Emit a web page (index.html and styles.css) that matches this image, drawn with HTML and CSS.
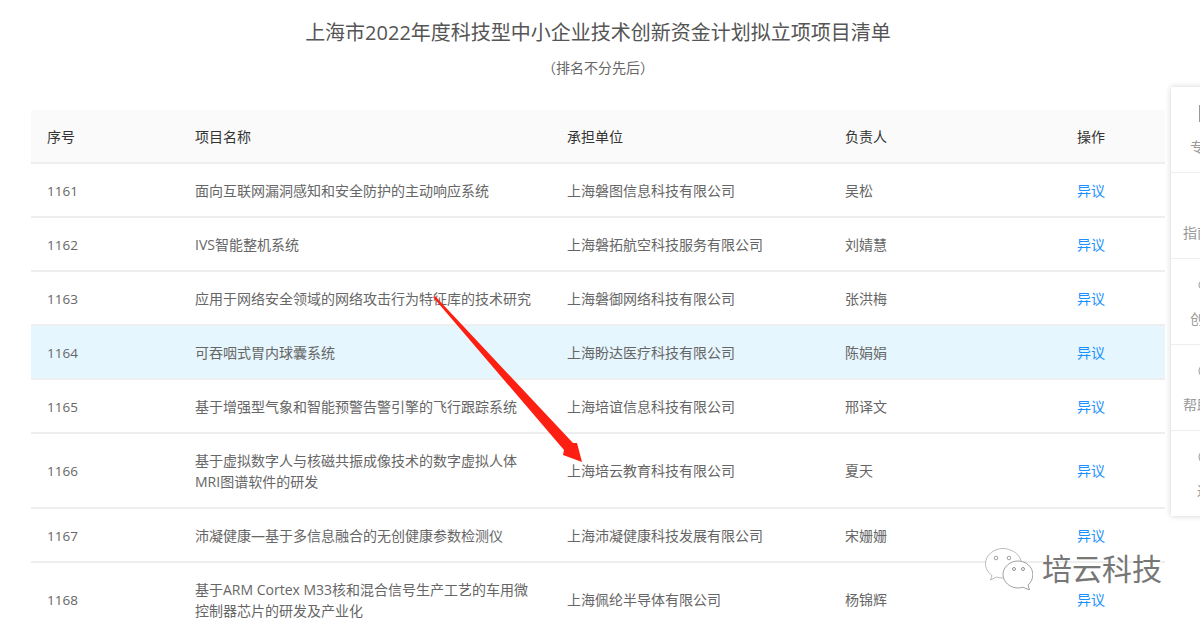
FILE: index.html
```html
<!DOCTYPE html>
<html lang="zh-CN">
<head>
<meta charset="utf-8">
<title>项目清单</title>
<link rel="stylesheet" href="styles.css">
</head>
<body>
<main class="page">
  <h1 class="title">上海市2022年度科技型中小企业技术创新资金计划拟立项项目清单</h1>
  <p class="subtitle">（排名不分先后）</p>
  <table class="list">
    <colgroup><col class="c1"><col class="c2"><col class="c3"><col class="c4"><col class="c5"></colgroup>
    <thead><tr><th>序号</th><th>项目名称</th><th>承担单位</th><th>负责人</th><th>操作</th></tr></thead>
    <tbody>
      <tr><td class="num">1161</td><td>面向互联网漏洞感知和安全防护的主动响应系统</td><td>上海磐图信息科技有限公司</td><td>吴松</td><td><a>异议</a></td></tr>
      <tr><td class="num">1162</td><td>IVS智能整机系统</td><td>上海磐拓航空科技服务有限公司</td><td>刘婧慧</td><td><a>异议</a></td></tr>
      <tr><td class="num">1163</td><td>应用于网络安全领域的网络攻击行为特征库的技术研究</td><td>上海磐御网络科技有限公司</td><td>张洪梅</td><td><a>异议</a></td></tr>
      <tr class="hover"><td class="num">1164</td><td>可吞咽式胃内球囊系统</td><td>上海盼达医疗科技有限公司</td><td>陈娟娟</td><td><a>异议</a></td></tr>
      <tr><td class="num">1165</td><td>基于增强型气象和智能预警告警引擎的飞行跟踪系统</td><td>上海培谊信息科技有限公司</td><td>邢译文</td><td><a>异议</a></td></tr>
      <tr class="tall"><td class="num">1166</td><td class="multi">基于虚拟数字人与核磁共振成像技术的数字虚拟人体MRI图谱软件的研发</td><td>上海培云教育科技有限公司</td><td>夏天</td><td><a>异议</a></td></tr>
      <tr><td class="num">1167</td><td>沛凝健康—基于多信息融合的无创健康参数检测仪</td><td>上海沛凝健康科技发展有限公司</td><td>宋姗姗</td><td><a>异议</a></td></tr>
      <tr class="tall"><td class="num">1168</td><td class="multi">基于ARM Cortex M33核和混合信号生产工艺的车用微控制器芯片的研发及产业化</td><td>上海佩纶半导体有限公司</td><td>杨锦辉</td><td><a>异议</a></td></tr>
    </tbody>
  </table>
</main>
<aside class="side">
  <div class="side-item">
    <svg class="ico" viewBox="0 0 22 22" aria-hidden="true"><rect x="6.500" y="3.500" width="10" height="16" fill="none" stroke="#999"/></svg>
    <span class="lbl">专家</span>
  </div>
  <div class="side-item">
    <svg class="ico" viewBox="0 0 22 22" aria-hidden="true"><circle cx="14" cy="11" r="6" fill="none" stroke="#999"/></svg>
    <span class="lbl">指南针</span>
  </div>
  <div class="side-item">
    <svg class="ico" viewBox="0 0 22 22" aria-hidden="true"><circle cx="11" cy="11" r="5" fill="none" stroke="#999"/></svg>
    <span class="lbl">创新</span>
  </div>
  <div class="side-item">
    <svg class="ico" viewBox="0 0 22 22" aria-hidden="true"><circle cx="13" cy="11" r="7" fill="none" stroke="#999"/></svg>
    <span class="lbl">帮助台</span>
  </div>
  <div class="side-item">
    <svg class="ico" viewBox="0 0 22 22" aria-hidden="true"><circle cx="13" cy="11" r="7" fill="none" stroke="#999"/></svg>
    <span class="lbl">返</span>
  </div>
</aside>
<svg class="arrow" viewBox="0 0 1200 624" aria-hidden="true">
  <polygon points="433,297 435,296 573,443 577,443 582,462 563,455 564,450" fill="#fd2012"/>
</svg>
<div class="mark">
  <svg class="wx" viewBox="0 0 48 42" aria-hidden="true">
    <path d="M18 .5C8.500 .5 .5 7.500 .5 15.500c0 5 2.500 9 6.500 12l-1.500 4.500 6-3c2 .6 4 1 6 1 10 0 19-7 19-15C36 7 27 .5 18 .5z" fill="#fff" stroke="#aaa" stroke-width=".8"/>
    <circle cx="11" cy="10" r="1.800" fill="none" stroke="#888" stroke-width=".8"/>
    <circle cx="24" cy="10" r="1.800" fill="none" stroke="#888" stroke-width=".8"/>
    <path d="M33 13c-8 0-15 6-15 13.500S25 40 33 40c1.500 0 3-.3 5-.8l6.500 2.800-1.500-5c3-2.500 4.800-6 4.800-10.500C47.800 19 41 13 33 13z" fill="#fff" stroke="#888" stroke-width=".8"/>
    <circle cx="29" cy="21" r="1.500" fill="none" stroke="#777" stroke-width=".8"/>
    <circle cx="38" cy="21" r="1.500" fill="none" stroke="#777" stroke-width=".8"/>
  </svg>
  <span class="mark-text">培云科技</span>
</div>
</body>
</html>
```
FILE: styles.css
```css
html, body { margin: 0; padding: 0; height: 624px; overflow: hidden; background: #fff; }
body { font-family: "Open Sans", "Noto Sans CJK SC", sans-serif; color: #666; font-size: 14px; position: relative; }
.page { padding: 0 35px 0 31px; }
.title { margin: 0; padding-top: 18px; height: 30px; line-height: 30px; font-size: 20px; font-weight: 400; color: #555; text-align: center; }
.subtitle { margin: 0; padding-top: 10px; height: 52px; line-height: 20px; font-size: 14px; color: #666; text-align: center; }
.list { width: 1134px; border-collapse: collapse; table-layout: fixed; }
.c1 { width: 148px; } .c2 { width: 372px; } .c3 { width: 278px; } .c4 { width: 232px; } .c5 { width: 104px; }
th, td { box-sizing: border-box; height: 54px; padding: 1px 16px 0; text-align: left; font-weight: 400; font-size: 14px; line-height: 21px; border-bottom: 2px solid #eee; }
th { height: 53px; background: #fafafa; color: #333; }
td { color: #666; }
td.num { font-size: 13.5px; padding-top: 3px; }
.hover td { background: #e6f6fe; }
.tall td { height: 75px; padding-top: 0; padding-bottom: 1px; }
.tall td.multi { padding-top: 1px; padding-bottom: 0; }
.tall td.num { padding-top: 2px; padding-bottom: 0; }
a { color: #1890ff; }
.side { position: absolute; left: 1171px; top: 87px; width: 66px; height: 429px; background: #fff; box-shadow: 0 0 6px rgba(0,0,0,.18); }
.side-item { height: 86px; border-bottom: 1px solid #eee; display: flex; flex-direction: column; align-items: center; gap: 14px; padding-top: 15px; box-sizing: border-box; }
.side-item:last-child { border-bottom: 0; height: 85px; }
.ico { width: 22px; height: 22px; flex: none; }
.lbl { font-size: 14px; line-height: 18px; color: #999; white-space: nowrap; }
.arrow { position: absolute; left: 0; top: 0; width: 1200px; height: 624px; pointer-events: none; }
.mark { position: absolute; left: 985px; top: 547px; display: flex; align-items: center; gap: 9px; }
.wx { width: 48px; height: 42px; }
.mark-text { font-size: 30px; line-height: 44px; color: #777; text-shadow: 1px 1px 0 rgba(255,255,255,.8); }
```
